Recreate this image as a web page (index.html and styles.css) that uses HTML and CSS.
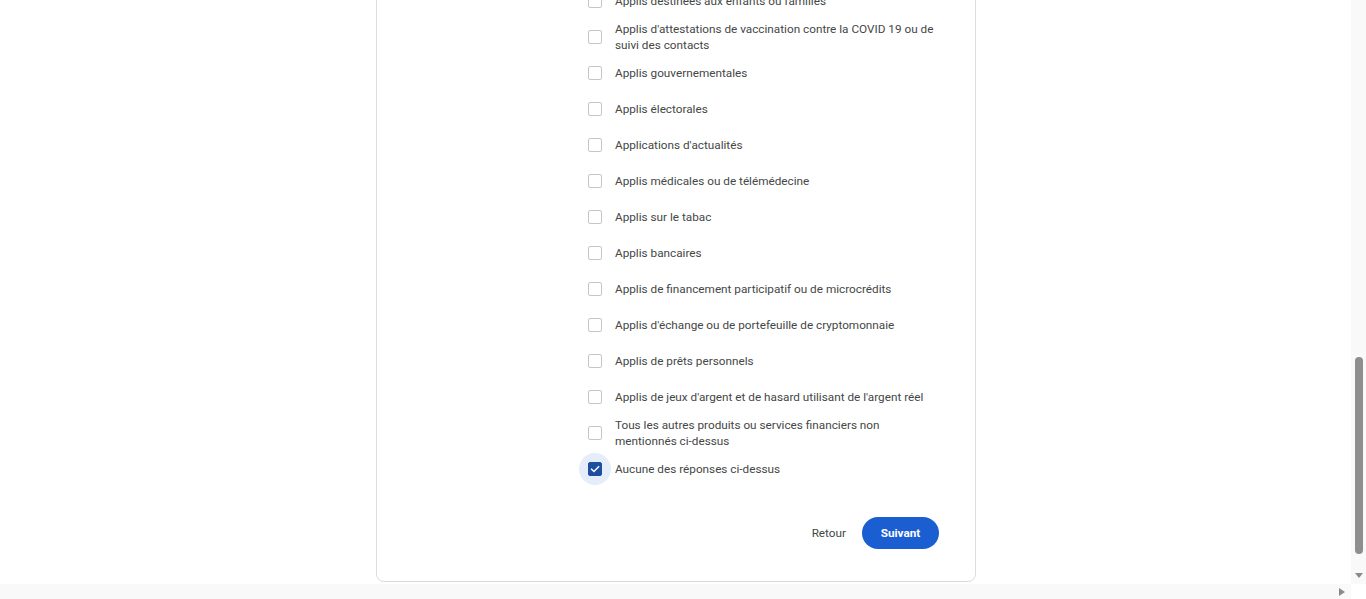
FILE: index.html
```html
<!DOCTYPE html>
<html lang="fr">
<head>
<meta charset="utf-8">
<title>Catégories d'applis</title>
<link rel="stylesheet" href="styles.css">
</head>
<body>
<div class="window">
  <div class="top">
    <main class="main">
      <section class="card">
        <ul class="options">
          <li class="option"><span class="box-wrap"><span class="box"></span></span><span class="label">Applis de rencontres</span></li>
          <li class="option"><span class="box-wrap"><span class="box"></span></span><span class="label">Applis de prêt d'argent</span></li>
          <li class="option"><span class="box-wrap"><span class="box"></span></span><span class="label">Applis destinées aux enfants ou familles</span></li>
          <li class="option"><span class="box-wrap"><span class="box"></span></span><span class="label">Applis d'attestations de vaccination contre la COVID 19 ou de suivi des contacts</span></li>
          <li class="option"><span class="box-wrap"><span class="box"></span></span><span class="label">Applis gouvernementales</span></li>
          <li class="option"><span class="box-wrap"><span class="box"></span></span><span class="label">Applis électorales</span></li>
          <li class="option"><span class="box-wrap"><span class="box"></span></span><span class="label">Applications d'actualités</span></li>
          <li class="option"><span class="box-wrap"><span class="box"></span></span><span class="label">Applis médicales ou de télémédecine</span></li>
          <li class="option"><span class="box-wrap"><span class="box"></span></span><span class="label">Applis sur le tabac</span></li>
          <li class="option"><span class="box-wrap"><span class="box"></span></span><span class="label">Applis bancaires</span></li>
          <li class="option"><span class="box-wrap"><span class="box"></span></span><span class="label">Applis de financement participatif ou de microcrédits</span></li>
          <li class="option"><span class="box-wrap"><span class="box"></span></span><span class="label">Applis d'échange ou de portefeuille de cryptomonnaie</span></li>
          <li class="option"><span class="box-wrap"><span class="box"></span></span><span class="label">Applis de prêts personnels</span></li>
          <li class="option"><span class="box-wrap"><span class="box"></span></span><span class="label">Applis de jeux d'argent et de hasard utilisant de l'argent réel</span></li>
          <li class="option"><span class="box-wrap"><span class="box"></span></span><span class="label">Tous les autres produits ou services financiers non mentionnés ci-dessus</span></li>
          <li class="option"><span class="box-wrap checked"><span class="box"><svg viewBox="0 0 14 14" width="14" height="14"><path d="M3 7.2 L5.8 10 L11.2 4.4" fill="none" stroke="#fff" stroke-width="1.7" stroke-linecap="square"/></svg></span></span><span class="label">Aucune des réponses ci-dessus</span></li>
        </ul>
        <div class="actions">
          <button class="btn-text" type="button">Retour</button>
          <button class="btn-primary" type="button">Suivant</button>
        </div>
      </section>
    </main>
    <div class="vscroll">
      <div class="vspace"></div>
      <div class="vthumb"></div>
      <div class="arrow-down"></div>
    </div>
  </div>
  <div class="hscroll">
    <div class="hspace"></div>
    <div class="arrow-right"></div>
    <div class="corner"></div>
  </div>
</div>
</body>
</html>
```

FILE: styles.css
```css
* { box-sizing: border-box; }
html, body { margin: 0; padding: 0; }
body {
  width: 1366px;
  height: 599px;
  overflow: hidden;
  background: #fff;
  font-family: Roboto, "Liberation Sans", Arial, sans-serif;
  color: #444746;
}
.window { display: flex; flex-direction: column; height: 599px; }
.top { display: flex; height: 584px; }
.main {
  flex: 1;
  height: 584px;
  overflow: hidden;
  display: flex;
  flex-direction: column;
  justify-content: flex-end;
}
.card {
  flex-shrink: 0;
  width: 600px;
  margin: 0 0 2px 376px;
  border: 1px solid #dadce0;
  border-radius: 8px;
  padding: 0 36px 32px 202px;
  background: #fff;
}
.options { list-style: none; margin: 0; padding: 0; }
.option {
  display: flex;
  align-items: center;
  height: 36px;
}
.box-wrap {
  width: 32px;
  height: 32px;
  flex-shrink: 0;
  border-radius: 50%;
  display: flex;
  align-items: center;
  justify-content: center;
}
.box {
  width: 14px;
  height: 14px;
  border: 1px solid #c4c7c5;
  border-radius: 2px;
  background: #fff;
  display: flex;
  align-items: center;
  justify-content: center;
}
.box svg { display: block; }
.checked { background: #e4edf9; }
.checked .box { background: #1c4f9f; border-color: #1c4f9f; }
.label {
  margin-left: 4px;
  width: 324px;
  font-size: 11.75px;
  line-height: 16px;
  color: #444746;
}
.actions {
  display: flex;
  justify-content: flex-end;
  align-items: center;
  gap: 4px;
  margin-top: 30px;
}
.btn-text, .btn-primary {
  font-family: Roboto, "Liberation Sans", Arial, sans-serif;
  font-size: 11.75px;
  height: 32px;
  border: 0;
  border-radius: 16px;
  cursor: pointer;
}
.btn-text {
  background: transparent;
  color: #444746;
  padding: 0 12px;
}
.btn-primary {
  background: #1a5ed1;
  color: #fff;
  font-weight: 700;
  width: 77px;
  padding: 0;
}
.vscroll {
  width: 15px;
  height: 584px;
  background: #f9f9f9;
  display: flex;
  flex-direction: column;
  align-items: center;
}
.vspace { height: 357px; }
.vthumb {
  width: 8px;
  height: 197px;
  border-radius: 4px;
  background: #8e8e8e;
}
.arrow-down {
  margin-top: 19px;
  width: 0; height: 0;
  border-left: 4px solid transparent;
  border-right: 4px solid transparent;
  border-top: 5px solid #8a8a8a;
}
.hscroll {
  height: 15px;
  background: #f9f9f9;
  display: flex;
  align-items: center;
}
.hspace { flex: 1; }
.arrow-right {
  width: 0; height: 0;
  border-top: 4px solid transparent;
  border-bottom: 4px solid transparent;
  border-left: 6px solid #8a8a8a;
  margin-right: 6px;
}
.corner { width: 15px; height: 15px; background: #fff; }
```
